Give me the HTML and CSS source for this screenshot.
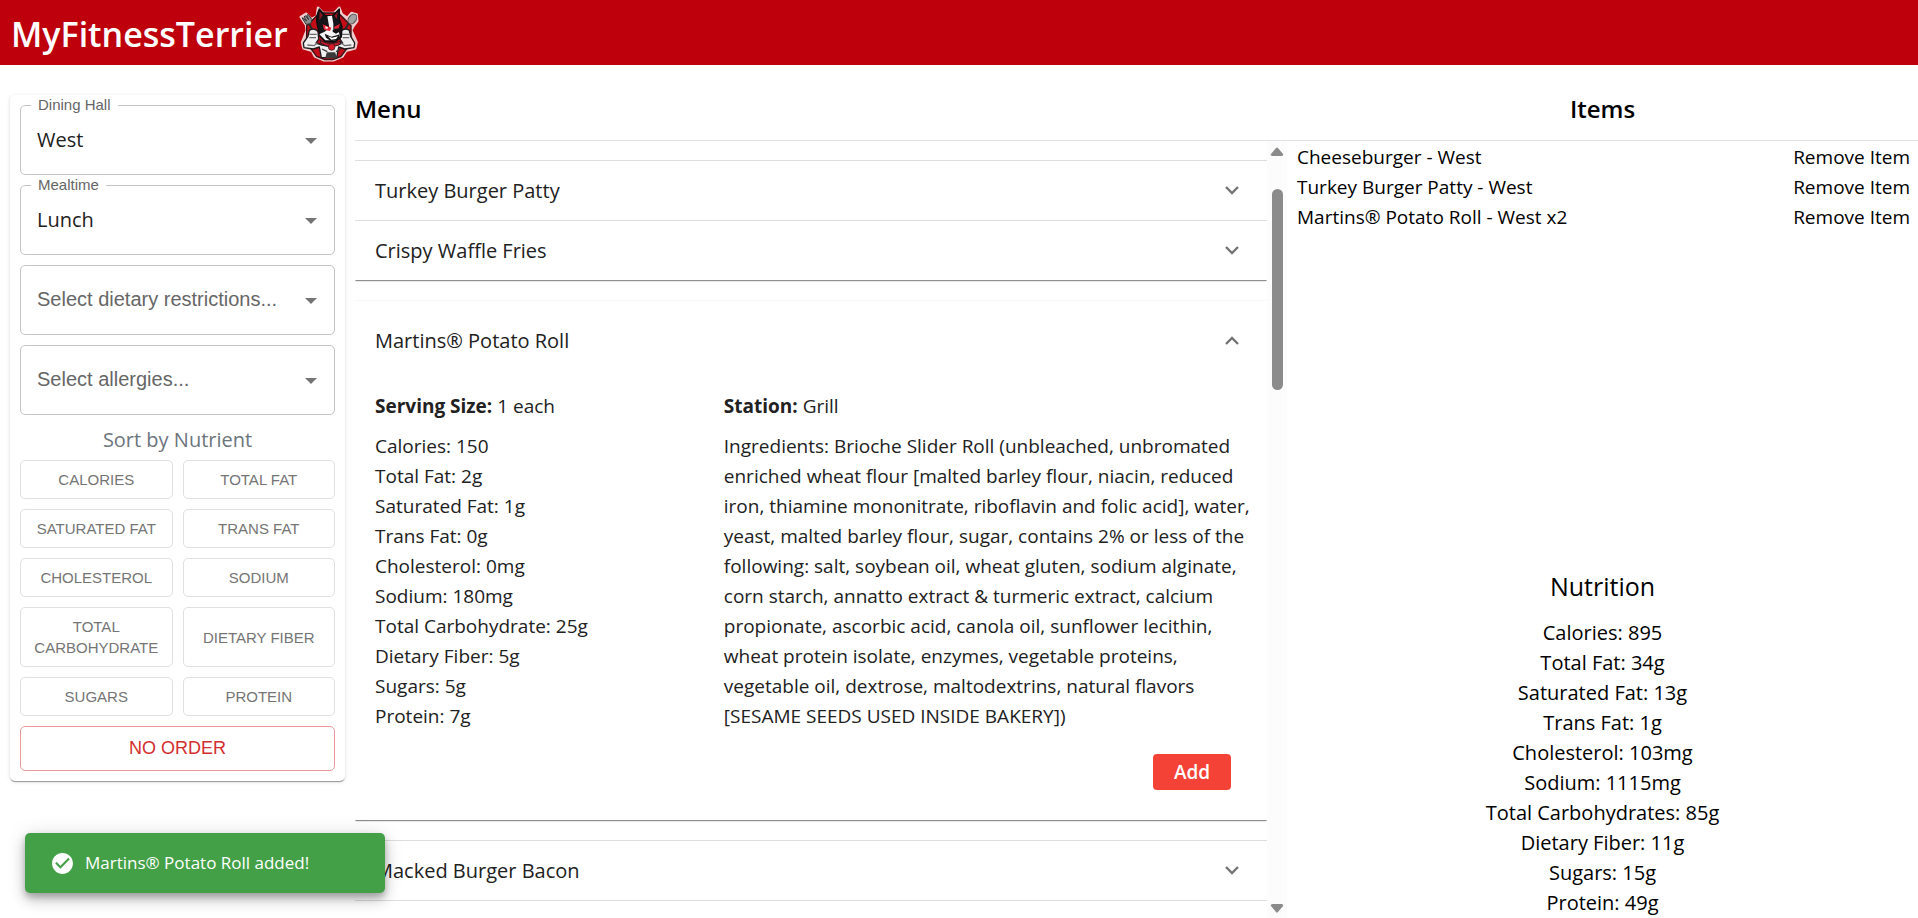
FILE: index.html
```html
<!DOCTYPE html>
<html lang="en">
<head>
<meta charset="utf-8">
<title>MyFitnessTerrier</title>
<link rel="stylesheet" href="styles.css">
</head>
<body>
<header class="topbar">
  <h1 class="brand">MyFitnessTerrier</h1>
  <svg class="mascot" viewBox="0 0 186 180" aria-hidden="true">
    <path d="M60 14 76 30 108 30 124 14 132 34 148 44 160 30 176 34 178 54 166 70 160 82 176 118 172 136 144 144 134 160 106 172 78 172 50 160 42 144 16 136 12 118 26 82 24 66 8 42 24 32 40 48 56 40Z" fill="#e8b9bc" stroke="#efcdcf" stroke-width="7" stroke-linejoin="round"/>
    <path d="M65 30h56l38 38v52l-30 40-24 10H80l-24-10-30-40V68z" fill="#c20c18" stroke="#3a1114" stroke-width="4"/>
    <path d="M32 60 46 86M152 60 138 86" stroke="#2a2a2a" stroke-width="6"/>
    <path d="m12 44 12 20 14-2 4-12-12-16-4 4 6 12-10-12-4 4 8 12z" fill="#8d8d8d" stroke="#333" stroke-width="3"/>
    <ellipse cx="163" cy="48" rx="11" ry="16" transform="rotate(35 163 48)" fill="#a3a3a3" stroke="#555" stroke-width="3"/>
    <path d="M34 82c10-6 22-4 26 4l2 22-8 12 18 6 22 4 22-4 18-6-8-12 2-22c4-8 16-10 26-4l4 18 12 20-2 14-28 4-18-6-6 32H70l-6-32-18 6-28-4-2-14 14-20z" fill="#f0f0f0" stroke="#1c1c1c" stroke-width="4" stroke-linejoin="round"/>
    <path d="M34 94h22M34 104h20M132 94h22M134 104h20M28 126l20 2 10-8M160 126l-20 2-10-8" fill="none" stroke="#6c6c6c" stroke-width="4"/>
    <path d="M64 18c-8 16-10 32-6 48l8 34 16 16 28 2 20-16 2-30-8-24 0-30-20 20-22 0z" fill="#151519" stroke="#0c0c0e" stroke-width="4" stroke-linejoin="round"/>
    <path d="m65 26 9 10-10 16zM119 26l-10 12 8 10z" fill="#8f1620"/>
    <path d="m88 40 14-2 4 24 0 18 16 6 4 12-14 14-30 0-18-18 16-8 14-12z" fill="#f6f6f6"/>
    <path d="m74 64 26 10-4 10-18-4zM126 62l-18 10 2 6 12-2z" fill="#e02535"/>
    <path d="M82 70l8 3-2 5-6-2z" fill="#fff"/>
    <path d="m104 80 16 0 4 6-10 6-10-6z" fill="#111"/>
    <path d="m80 92 20 9 26-7-6 16-22 4-14-10z" fill="#141414"/>
    <path d="m90 100 12 4 18-4-6 8-14 2z" fill="#fff"/>
    <path d="M66 110c14 14 44 14 62 4l-2 10c-18 10-44 8-58-4z" fill="#c9162a" stroke="#222" stroke-width="3"/>
    <circle cx="101" cy="132" r="10" fill="#d61c2b" stroke="#3a1114" stroke-width="2"/>
    <path d="M72 138l16 8M128 138l-14 8M84 164l4-14h22l4 14z" fill="#3a3a3a" stroke="#3a3a3a" stroke-width="4"/>
  </svg>
</header>

<main class="layout">
  <aside class="filters">
    <div class="field">
      <label class="float" for="hall">Dining Hall</label>
      <select id="hall"><option>West</option></select>
      <svg class="caret" viewBox="0 0 12 6" aria-hidden="true"><path d="M0 0h12L6 6z"/></svg>
    </div>
    <div class="field">
      <label class="float" for="meal">Mealtime</label>
      <select id="meal"><option>Lunch</option></select>
      <svg class="caret" viewBox="0 0 12 6" aria-hidden="true"><path d="M0 0h12L6 6z"/></svg>
    </div>
    <div class="field">
      <select class="empty" aria-label="Dietary restrictions"><option>Select dietary restrictions...</option></select>
      <svg class="caret" viewBox="0 0 12 6" aria-hidden="true"><path d="M0 0h12L6 6z"/></svg>
    </div>
    <div class="field">
      <select class="empty" aria-label="Allergies"><option>Select allergies...</option></select>
      <svg class="caret" viewBox="0 0 12 6" aria-hidden="true"><path d="M0 0h12L6 6z"/></svg>
    </div>
    <h2 class="sort-title">Sort by Nutrient</h2>
    <div class="sort-grid">
      <button type="button">CALORIES</button>
      <button type="button">TOTAL FAT</button>
      <button type="button">SATURATED FAT</button>
      <button type="button">TRANS FAT</button>
      <button type="button">CHOLESTEROL</button>
      <button type="button">SODIUM</button>
      <button type="button">TOTAL CARBOHYDRATE</button>
      <button type="button">DIETARY FIBER</button>
      <button type="button">SUGARS</button>
      <button type="button">PROTEIN</button>
      <button type="button" class="no-order">NO ORDER</button>
    </div>
  </aside>

  <section class="menu">
    <h2 class="panel-title">Menu</h2>
    <div class="menu-body">
      <div class="menu-list">
        <div class="group">
          <button type="button" class="dish">Turkey Burger Patty
            <svg class="chevron" viewBox="0 0 14 9" aria-hidden="true"><path d="m1 1 6 6 6-6"/></svg></button>
          <button type="button" class="dish">Crispy Waffle Fries
            <svg class="chevron" viewBox="0 0 14 9" aria-hidden="true"><path d="m1 1 6 6 6-6"/></svg></button>
        </div>
        <article class="group open">
          <button type="button" class="dish" aria-expanded="true">Martins® Potato Roll
            <svg class="chevron" viewBox="0 0 14 9" aria-hidden="true"><path d="m1 8 6-6 6 6"/></svg></button>
          <div class="details">
            <div>
              <p class="lead"><strong>Serving Size:</strong> 1 each</p>
              <ul class="facts">
                <li>Calories: 150</li>
                <li>Total Fat: 2g</li>
                <li>Saturated Fat: 1g</li>
                <li>Trans Fat: 0g</li>
                <li>Cholesterol: 0mg</li>
                <li>Sodium: 180mg</li>
                <li>Total Carbohydrate: 25g</li>
                <li>Dietary Fiber: 5g</li>
                <li>Sugars: 5g</li>
                <li>Protein: 7g</li>
              </ul>
            </div>
            <div>
              <p class="lead"><strong>Station:</strong> Grill</p>
              <p class="ingredients">Ingredients: Brioche Slider Roll (unbleached, unbromated<br>
                enriched wheat flour [malted barley flour, niacin, reduced<br>
                iron, thiamine mononitrate, riboflavin and folic acid], water,<br>
                yeast, malted barley flour, sugar, contains 2% or less of the<br>
                following: salt, soybean oil, wheat gluten, sodium alginate,<br>
                corn starch, annatto extract &amp; turmeric extract, calcium<br>
                propionate, ascorbic acid, canola oil, sunflower lecithin,<br>
                wheat protein isolate, enzymes, vegetable proteins,<br>
                vegetable oil, dextrose, maltodextrins, natural flavors<br>
                [SESAME SEEDS USED INSIDE BAKERY])</p>
            </div>
          </div>
          <div class="actions"><button type="button" class="add">Add</button></div>
        </article>
        <div class="group">
          <button type="button" class="dish">Macked Burger Bacon
            <svg class="chevron" viewBox="0 0 14 9" aria-hidden="true"><path d="m1 1 6 6 6-6"/></svg></button>
          <button type="button" class="dish" aria-label="Next dish"></button>
        </div>
      </div>
      <div class="scrollbar" aria-hidden="true">
        <svg class="arrow" viewBox="0 0 14 10"><path d="M2 9h10q2-1 1-2L8 1Q7 0 6 1L1 7q-1 1 1 2z"/></svg>
        <div class="thumb"></div>
        <svg class="arrow" viewBox="0 0 14 10"><path d="M2 1h10q2 1 1 2L8 9Q7 10 6 9L1 3q-1-1 1-2z"/></svg>
      </div>
    </div>
  </section>

  <section class="items">
    <h2 class="panel-title centered">Items</h2>
    <ul class="picked">
      <li><span>Cheeseburger - West</span><button type="button">Remove Item</button></li>
      <li><span>Turkey Burger Patty - West</span><button type="button">Remove Item</button></li>
      <li><span>Martins® Potato Roll - West x2</span><button type="button">Remove Item</button></li>
    </ul>
    <div class="nutrition">
      <h3>Nutrition</h3>
      <ul class="totals">
        <li>Calories: 895</li>
        <li>Total Fat: 34g</li>
        <li>Saturated Fat: 13g</li>
        <li>Trans Fat: 1g</li>
        <li>Cholesterol: 103mg</li>
        <li>Sodium: 1115mg</li>
        <li>Total Carbohydrates: 85g</li>
        <li>Dietary Fiber: 11g</li>
        <li>Sugars: 15g</li>
        <li>Protein: 49g</li>
      </ul>
    </div>
  </section>
</main>

<div class="toast" role="status">
  <svg viewBox="0 0 24 24" aria-hidden="true"><path d="M12 2C6.480 2 2 6.480 2 12s4.480 10 10 10 10-4.480 10-10S17.520 2 12 2zm-2 15-5-5 1.410-1.410L10 14.170l7.590-7.590L19 8l-9 9z"/></svg>
  <span>Martins® Potato Roll added!</span>
</div>
</body>
</html>
```

FILE: styles.css
```css
* {
  box-sizing: border-box;
}

body {
  margin: 0;
  height: 100vh;
  display: flex;
  flex-direction: column;
  overflow: hidden;
  background: #fff;
  color: #000;
  font: 20px/30px "Open Sans", "Noto Sans", sans-serif;
}

h1, h2, h3, p, ul {
  margin: 0;
  padding: 0;
}

ul {
  list-style: none;
}

button {
  font: inherit;
  color: inherit;
  background: none;
  border: 0;
  padding: 0;
  cursor: pointer;
}

.topbar {
  flex: none;
  height: 65px;
  padding: 0 11px;
  display: flex;
  align-items: center;
  gap: 10px;
  background: #be000d;
}

.brand {
  padding-top: 2px;
  color: #fff;
  font-size: 34px;
  line-height: 48px;
  font-weight: 600;
}

.mascot {
  width: 62px;
  height: 60px;
}

.layout {
  flex: 1;
  min-height: 0;
  padding-top: 30px;
  padding-left: 10px;
  display: grid;
  grid-template-columns: 335px minmax(0, 942fr) minmax(0, 631fr);
  align-items: stretch;
}

.filters {
  align-self: start;
  padding: 10px;
  display: flex;
  flex-direction: column;
  gap: 10px;
  border-radius: 5px;
  box-shadow: 0 2px 1px -1px rgba(0, 0, 0, .25), 0 1px 1px rgba(0, 0, 0, .14), 0 1px 4px rgba(0, 0, 0, .12);
}

.field {
  position: relative;
  height: 70px;
}

.field select {
  width: 100%;
  height: 100%;
  padding: 0 40px 0 16px;
  appearance: none;
  border: 1px solid #c4c4c4;
  border-radius: 5px;
  background: #fff;
  color: #212121;
  font: 20px/30px "Open Sans", "Noto Sans", sans-serif;
}

.field select.empty {
  padding-bottom: 2px;
  color: #666;
  font-family: "Liberation Sans", Arial, sans-serif;
}

.float {
  position: absolute;
  top: -10px;
  left: 11px;
  padding: 0 7px;
  background: #fff;
  color: #666;
  font: 15px/20px "Liberation Sans", Arial, sans-serif;
}

.caret {
  position: absolute;
  top: 33px;
  right: 18px;
  width: 12px;
  height: 6px;
  fill: #757575;
  pointer-events: none;
}

.sort-title {
  margin-bottom: -5px;
  color: #6c757d;
  font-size: 20px;
  line-height: 30px;
  font-weight: 400;
  text-align: center;
}

.sort-grid {
  display: grid;
  grid-template-columns: 1fr 1fr;
  gap: 10px;
}

.sort-grid button {
  padding: 8px;
  border: 1px solid #e0e0e0;
  border-radius: 5px;
  color: #757575;
  font: 15px/21px "Liberation Sans", Arial, sans-serif;
}

.sort-grid .no-order {
  grid-column: 1 / -1;
  padding: 11px 8px;
  border-color: #ea9a9a;
  color: #d32f2f;
  font-size: 18px;
}

.menu, .items {
  min-height: 0;
  display: flex;
  flex-direction: column;
}

.panel-title {
  height: 46px;
  border-bottom: 1px solid #dee2e6;
  font-size: 24px;
  line-height: 28px;
  font-weight: 600;
}

.menu .panel-title {
  padding-left: 10px;
  border-bottom-color: transparent;
  background: linear-gradient(#dee2e6, #dee2e6) 10px 100% / 100% 1px no-repeat border-box;
}

.centered {
  text-align: center;
}

.menu-body {
  flex: 1;
  min-height: 0;
  margin-left: 10px;
  display: flex;
}

.menu-list {
  flex: 1;
  min-width: 0;
  padding-top: 19px;
  overflow: hidden;
  display: flex;
  flex-direction: column;
  gap: 20px;
  color: #212121;
}

.group {
  flex: none;
  box-shadow: 0 2px 1px -1px rgba(0, 0, 0, .3), 0 1px 1px rgba(0, 0, 0, .2);
}

.dish {
  width: 100%;
  height: 60px;
  padding: 0 28px 0 20px;
  display: flex;
  align-items: center;
  justify-content: space-between;
  border-top: 1px solid #dedede;
}

.chevron {
  width: 14px;
  height: 9px;
  fill: none;
  stroke: #757575;
  stroke-width: 2.4;
}

.open .dish {
  height: 80px;
  border-top-color: #f7f7f7;
}

.details {
  padding: 11px 20px 0;
  display: grid;
  grid-template-columns: 2fr 3fr;
}

.details > div {
  min-width: 0;
}

.lead {
  margin-bottom: 10px;
}

.lead strong {
  font-weight: 700;
}

.facts, .ingredients, .lead {
  font-size: 19px;
}

.ingredients {
  white-space: nowrap;
}

.actions {
  padding: 23px 36px 30px;
  display: flex;
  justify-content: flex-end;
}

.add {
  width: 78px;
  height: 36px;
  border-radius: 4px;
  background: #f44336;
  color: #fff;
  font-size: 19px;
  font-weight: 600;
}

.scrollbar {
  width: 20px;
  padding: 6px 0 5px;
  display: flex;
  flex-direction: column;
  align-items: center;
  background: #fcfcfc;
}

.arrow {
  flex: none;
  width: 14px;
  height: 10px;
  fill: #8b8b8b;
}

.thumb {
  flex: none;
  width: 11px;
  height: 201px;
  margin-top: 32px;
  margin-bottom: auto;
  border-radius: 6px;
  background: #8b8b8b;
}

.picked {
  flex: 1;
  padding: 1px 8px 0 10px;
}

.picked li {
  display: flex;
  justify-content: space-between;
  font-size: 19px;
}

.nutrition {
  flex: none;
  text-align: center;
}

.nutrition h3 {
  margin-bottom: 16px;
  font-size: 25px;
  line-height: 32px;
  font-weight: 400;
}

.toast {
  position: absolute;
  left: 25px;
  bottom: 25px;
  width: 360px;
  height: 60px;
  padding: 0 25px;
  display: flex;
  align-items: center;
  gap: 10px;
  border-radius: 5px;
  background: #43a047;
  color: #fff;
  font-size: 17px;
  font-weight: 500;
  box-shadow: 0 4px 6px rgba(0, 0, 0, .22), 0 8px 14px rgba(0, 0, 0, .16), 0 1px 20px rgba(0, 0, 0, .12);
}

.toast svg {
  width: 25px;
  height: 25px;
  fill: #fff;
}
```
